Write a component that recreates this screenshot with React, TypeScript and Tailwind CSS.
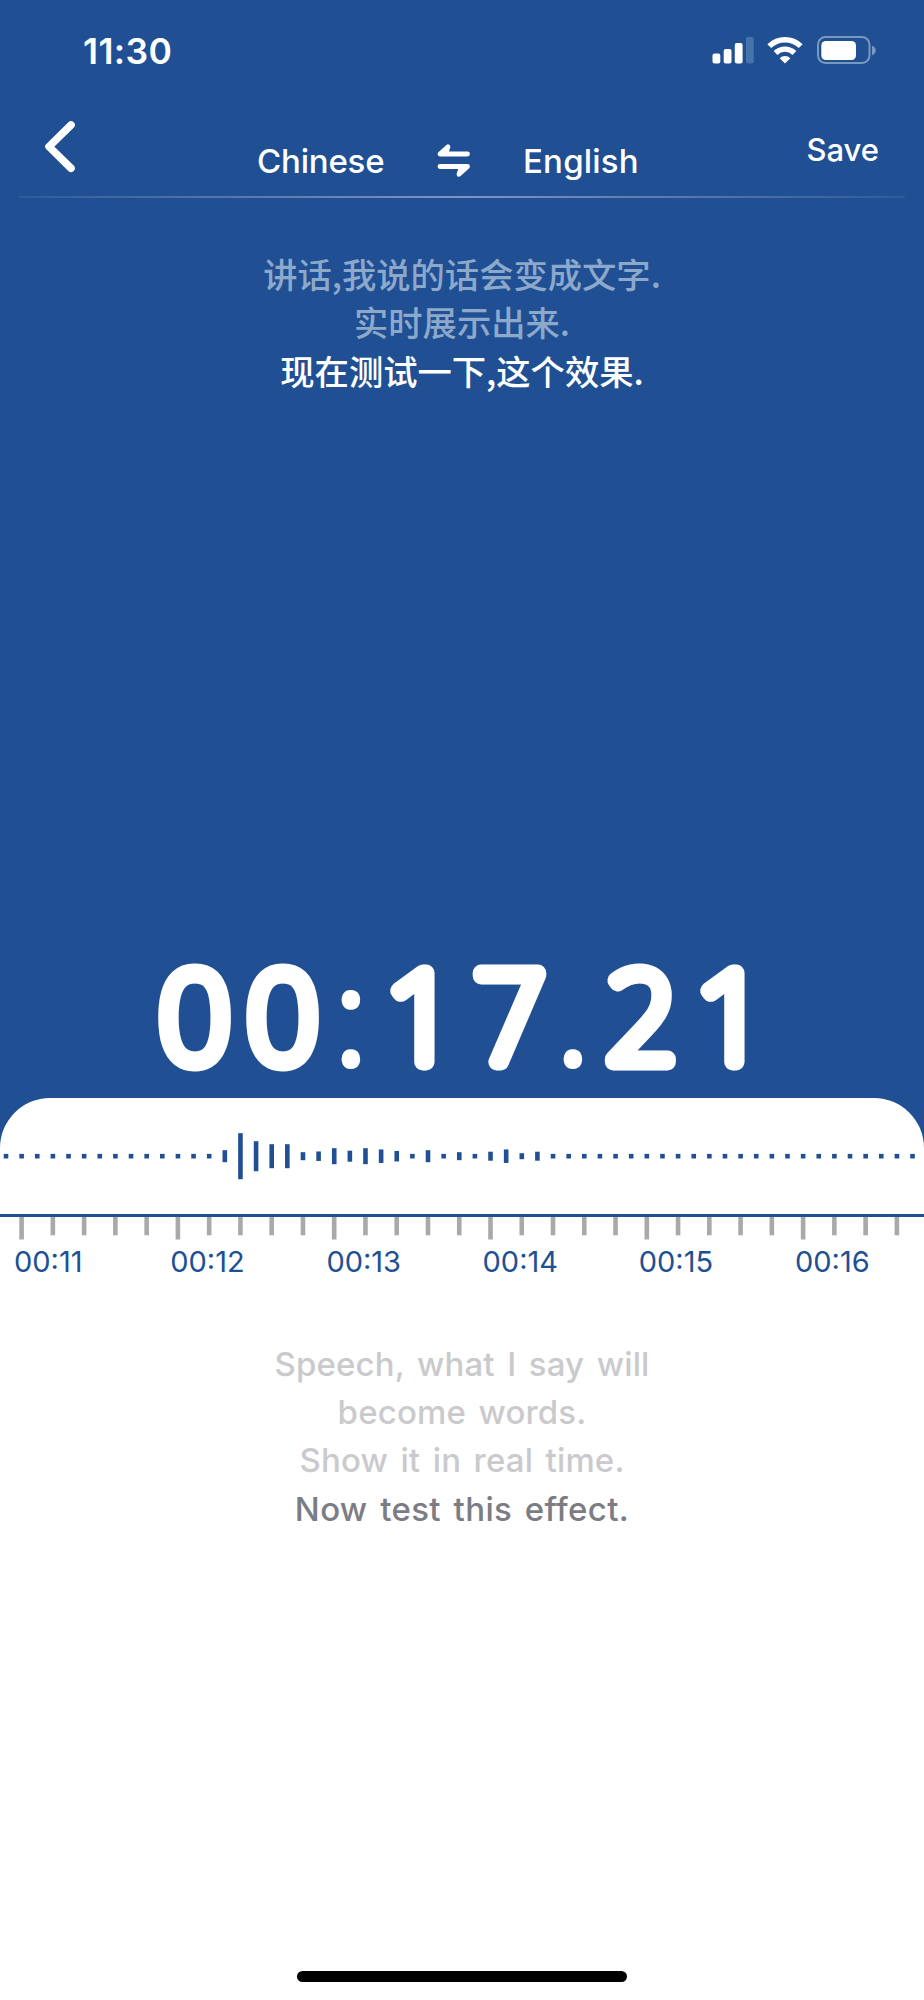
const BAR_GAP = 15.63

// bar heights of the recorded clip, everything silent is drawn as a dot
const levels: Record<number, number> = {
    14: 12, 15: 46, 16: 30, 17: 24, 18: 24, 19: 8, 20: 9.5, 21: 16, 22: 11, 23: 16,
    24: 13.5, 25: 10.5, 27: 12, 29: 8, 31: 9, 32: 13.5, 33: 6, 34: 9,
}

const seconds = ['00:11', '00:12', '00:13', '00:14', '00:15', '00:16']

function StatusBar() {
    return (
        <div className="flex h-[100px] items-center justify-between pl-[83px] pr-[47px]">
            <span className="mt-[3px] text-[35.5px] font-semibold leading-none tracking-[0.4px]">11:30</span>
            <svg className="h-[30px] w-[166px]" viewBox="711 35 166 30" fill="none">
                <rect x="712.5" y="53.5" width="7.8" height="10" rx="2" fill="white" />
                <rect x="723.7" y="49" width="7.8" height="14.5" rx="2" fill="white" />
                <rect x="734.8" y="43" width="7.8" height="20.5" rx="2" fill="white" />
                <rect x="746" y="37" width="7.8" height="26.5" rx="2" fill="#4673A9" />
                <g stroke="white" strokeWidth="5.4">
                    <path d="M769.3 46.2a22.3 22.3 0 0 1 31.4 0" />
                    <path d="M775.6 53a13.4 13.4 0 0 1 18.8 0" />
                </g>
                <path d="M785 63.6l-5.3-5.4a7.6 7.6 0 0 1 10.6 0z" fill="white" />
                <rect x="818" y="37" width="51.5" height="26" rx="7.5" stroke="#7898C0" strokeWidth="2" />
                <rect x="821.3" y="41" width="34.7" height="19" rx="4.5" fill="white" />
                <path d="M872 45.8c2.4.8 3.8 2.6 3.8 4.7s-1.4 3.9-3.8 4.7z" fill="#7898C0" />
            </svg>
        </div>
    )
}

function NavBar() {
    return (
        <header className="flex h-[96px] px-[44px]">
            <button className="mt-[20px] h-[54px] w-[34px]">
                <svg className="h-[54px] w-[34px]" viewBox="44 120 34 54" fill="none" stroke="white" strokeWidth="7.6" strokeLinecap="round" strokeLinejoin="round">
                    <path d="M71 125L49 146.6L71 168.3" />
                </svg>
            </button>
            <div className="mt-[40px] ml-[179px] flex h-[43px] items-center text-[33px] font-medium">
                <span className="w-[180px] tracking-[-0.2px]">Chinese</span>
                <svg className="-mt-[3px] h-[34px] w-[36px]" viewBox="437.5 143 36 34" fill="white" stroke="white" strokeWidth="4.8" strokeLinecap="round" strokeLinejoin="round">
                    <path d="M468 154H440.5L448.5 146.8L446 154" />
                    <path d="M440.5 166.5H468L459.5 174.3L462 166.5" />
                </svg>
                <span className="ml-[50px] tracking-[0.2px]">English</span>
            </div>
            <button className="mt-[27px] mr-[1px] ml-auto h-[44px] text-[31px] font-medium">Save</button>
        </header>
    )
}

function Timer() {
    return (
        <svg className="mt-auto h-[190px] w-full shrink-0" viewBox="0 0 924 190">
            {/* thin digits with a thick round stroke give the rounded ends */}
            <text
                className="font-['Noto_Sans'] text-[125px] font-thin"
                x="159 247 337 386 474 559 606 696"
                y="132"
                fill="white"
                stroke="white"
                strokeWidth="17"
                strokeLinejoin="round"
            >
                00<tspan strokeWidth="12">:</tspan>17<tspan strokeWidth="12">.</tspan>21
            </text>
        </svg>
    )
}

function Waveform() {
    return (
        <div className="flex h-[202px] flex-col overflow-hidden rounded-t-[50px] bg-white">
            <svg className="h-[116px] w-[924px]" viewBox="0 0 924 116" fill="#205093">
                {Array.from({ length: 59 }, (_, i) => {
                    const h = levels[i] ?? 4.6
                    return <rect key={i} x={3.7 + i * BAR_GAP} y={58.2 - h / 2} width="4.6" height={h} />
                })}
            </svg>
            <div className="h-[2.5px] shrink-0 bg-[#205093]" />
            <svg className="h-[23px] w-[924px] shrink-0" viewBox="0 0 924 23" fill="#A9A9A9">
                {Array.from({ length: 29 }, (_, i) => (
                    <rect key={i} x={19.3 + i * BAR_GAP * 2} y="0" width="4.6" height={i % 5 === 0 ? 22.5 : 18.3} />
                ))}
            </svg>
            <div className="flex pl-[14px] text-[29px] leading-[44px] text-[#205093]">
                {seconds.map((label) => (
                    <span key={label} className="w-[156.2px] shrink-0">{label}</span>
                ))}
            </div>
        </div>
    )
}

export default function App() {
    return (
        <div className="flex h-[2000px] w-[924px] flex-col bg-white font-['Inter',sans-serif]">
            <div className="flex h-[1160px] flex-col bg-[#205093] text-white">
                <StatusBar />
                <NavBar />
                <div className="mx-[19px] h-[2px] bg-linear-to-r from-[#2D5C9B] via-[#8493C2] to-[#2D5C9B]" />
                <div className="mt-[51px] text-center font-['Noto_Sans_CJK_SC',sans-serif] text-[34.3px] font-medium leading-[48.3px]">
                    <p className="text-[#8CA8CB]">讲话,我说的话会变成文字.</p>
                    <p className="text-[#8CA8CB]">实时展示出来.</p>
                    <p>现在测试一下,这个效果.</p>
                </div>
                <Timer />
                <div className="h-[40px] shrink-0" />
            </div>
            <div className="-mt-[62px]">
                <Waveform />
            </div>
            <div className="mt-[40px] text-center text-[33px] font-medium leading-[48.2px] tracking-[0.15px] text-[#CACACC] [word-spacing:3.5px]">
                <p>Speech, what I say will</p>
                <p>become words.</p>
                <p>Show it in real time.</p>
                <p className="tracking-[0.35px] text-[#7C7C84]">Now test this effect.</p>
            </div>
            <div className="mx-auto mt-auto mb-[18px] h-[11px] w-[330px] rounded-full bg-black" />
        </div>
    )
}
